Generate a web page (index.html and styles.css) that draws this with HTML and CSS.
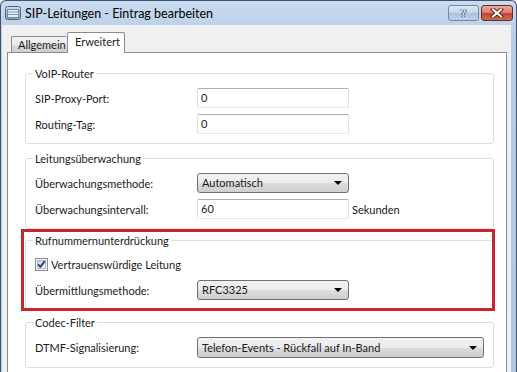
FILE: index.html
```html
<!DOCTYPE html>
<html lang="de">
<head>
    <meta charset="UTF-8">
    <title>SIP-Leitungen - Eintrag bearbeiten</title>
    <link rel="stylesheet" href="styles.css">
</head>
<body>
    <div class="window">
        <div class="titlebar">
            <svg class="app-icon" width="16" height="16" viewBox="0 0 16 16">
                <defs>
                    <linearGradient id="ig" x1="0" y1="0" x2="0" y2="1">
                        <stop offset="0" stop-color="#c9dced"/>
                        <stop offset="1" stop-color="#7f9fbd"/>
                    </linearGradient>
                </defs>
                <rect x="0.5" y="1.5" width="15" height="13" rx="2" fill="url(#ig)" stroke="#56636f"/>
                <rect x="2.5" y="4.5" width="11" height="8" fill="#e6eff7" stroke="#6f8aa3"/>
                <line x1="3" y1="7" x2="13" y2="7" stroke="#7e9bb6"/>
                <line x1="3" y1="9.5" x2="13" y2="9.5" stroke="#7e9bb6"/>
            </svg>
            <span class="title">SIP-Leitungen - Eintrag bearbeiten</span>
            <div class="caption-buttons">
                <div class="cap-btn help">?</div>
                <div class="cap-btn close">
                    <svg width="14" height="10" viewBox="0 0 14 10">
                        <path d="M3 1.5 L11 8.5 M11 1.5 L3 8.5" stroke="#5a1b12" stroke-width="4" stroke-linecap="square"/>
                        <path d="M3 1.5 L11 8.5 M11 1.5 L3 8.5" stroke="#fff" stroke-width="2.2" stroke-linecap="square"/>
                    </svg>
                </div>
            </div>
        </div>

        <div class="client">
            <div class="tabs">
                <div class="tab">Allgemein</div>
                <div class="tab selected">Erweitert</div>
            </div>

            <div class="panel">
                <!-- VoIP-Router -->
                <div class="group">
                    <div class="group-title">VoIP-Router</div>
                    <div class="row">
                        <span class="label">SIP-Proxy-Port:</span>
                        <div class="edit">0</div>
                    </div>
                    <div class="row">
                        <span class="label">Routing-Tag:</span>
                        <div class="edit">0</div>
                    </div>
                </div>

                <!-- Leitungsüberwachung -->
                <div class="group">
                    <div class="group-title">Leitungsüberwachung</div>
                    <div class="row">
                        <span class="label">Überwachungsmethode:</span>
                        <div class="combo">Automatisch<span class="arrow"></span></div>
                    </div>
                    <div class="row">
                        <span class="label">Überwachungsintervall:</span>
                        <div class="edit">60</div>
                        <span class="unit">Sekunden</span>
                    </div>
                </div>

                <!-- Rufnummernunterdrückung -->
                <div class="group group-clir">
                    <div class="group-title">Rufnummernunterdrückung</div>
                    <div class="row row-check">
                        <svg class="checkbox" width="13" height="13" viewBox="0 0 13 13">
                            <defs>
                                <linearGradient id="cg" x1="0" y1="0" x2="1" y2="1">
                                    <stop offset="0" stop-color="#cbcfd5"/>
                                    <stop offset="1" stop-color="#f6f6f6"/>
                                </linearGradient>
                            </defs>
                            <rect x="0.5" y="0.5" width="12" height="12" fill="#f4f4f4" stroke="#8e8f8f"/>
                            <rect x="2.5" y="2.5" width="8" height="8" fill="url(#cg)" stroke="#b7bcc4"/>
                            <path d="M3.2 6.4 L5.4 8.8 L9.8 3.2" fill="none" stroke="#2b3f86" stroke-width="1.9"/>
                        </svg>
                        <span class="check-label">Vertrauenswürdige Leitung</span>
                    </div>
                    <div class="row">
                        <span class="label">Übermittlungsmethode:</span>
                        <div class="combo">RFC3325<span class="arrow"></span></div>
                    </div>
                </div>

                <!-- Codec-Filter -->
                <div class="group group-codec">
                    <div class="group-title">Codec-Filter</div>
                    <div class="row">
                        <span class="label">DTMF-Signalisierung:</span>
                        <div class="combo combo-wide">Telefon-Events - Rückfall auf In-Band<span class="arrow"></span></div>
                    </div>
                </div>

                <div class="highlight"></div>
            </div>
        </div>
    </div>
</body>
</html>
```

FILE: styles.css
```css
/* page */
body {
    margin: 0;
    font-family: Lato, "Open Sans", sans-serif;
    font-size: 11px;
    color: #1a1a1a;
    background: #f0f0f0;
}

/* window frame */
.window {
    width: 517px;
    height: 372px;
    box-sizing: border-box;
    display: flex;
    flex-direction: column;
    border: 1px solid #3f536b;
    border-bottom: none;
    border-radius: 6px 6px 0 0;
    background: linear-gradient(#c8dbef, #b6cde7 40px, #aec7e3);
    overflow: hidden;
}

/* title bar */
.titlebar {
    height: 24px;
    display: flex;
    align-items: flex-start;
    padding: 0 3px 0 4px;
    box-sizing: border-box;
}

.app-icon {
    margin-top: 4px;
    flex: none;
}

.title {
    margin-left: 4px;
    margin-top: 5px;
    line-height: 15px;
    font-size: 12.5px;
    color: #000;
}

.caption-buttons {
    margin-left: auto;
    margin-top: 4px;
    display: flex;
    gap: 2px;
}

.cap-btn {
    height: 16px;
    box-sizing: border-box;
    border-radius: 3px;
    display: flex;
    align-items: center;
    justify-content: center;
}

.cap-btn.help {
    width: 31px;
    border: 1px solid #7688a0;
    background: linear-gradient(#dbe7f4, #c2d5ea 50%, #a9c1dc 51%, #bcd3ea);
    color: #fff;
    font-family: "DejaVu Sans", sans-serif;
    font-size: 11px;
    text-shadow: 0 0 1px #2d3d52, 1px 0 0 #3d4e66, -1px 0 0 #3d4e66;
}

.cap-btn.close {
    width: 32px;
    border: 1px solid #6d2a22;
    background: linear-gradient(#e9a99b, #d97f6c 50%, #c4432d 51%, #d16a4e);
}

/* client area */
.client {
    flex: 1;
    display: flex;
    flex-direction: column;
    margin: 0 5px 0 1px;
    padding: 0 4px 0 5px;
    background: #f0f0f0;
}

/* tabs */
.tabs {
    display: flex;
    padding: 7px 0 0 4px;
    height: 20px;
    position: relative;
    z-index: 1;
}

.tab {
    box-sizing: border-box;
    border: 1px solid #898c95;
    border-bottom: none;
    border-radius: 2px 2px 0 0;
    padding: 0 6px;
}

.tab:not(.selected) {
    width: 56px;
    height: 16px;
    margin-top: 4px;
    line-height: 15px;
    background: linear-gradient(#f3f3f3, #ebebeb 50%, #dddddd 51%, #cfcfcf);
    border-right: none;
}

.tab.selected {
    width: 58px;
    height: 21px;
    line-height: 18px;
    padding-left: 7px;
    background: #fff;
}

/* tab panel */
.panel {
    flex: 1;
    position: relative;
    background: #fff;
    border: 1px solid #898c95;
    border-bottom: none;
    padding-top: 20px;
}

/* group boxes */
.group {
    border: 1px solid #d5dfe5;
    border-radius: 3px;
    margin: 0 12px 0 17px;
    padding: 0 9px 9px 9px;
}

.group + .group {
    margin-top: 14px;
}

.group.group-clir {
    margin-top: 11px;
}

.group.group-codec {
    margin-top: 12px;
}

.group-title {
    width: fit-content;
    margin: -8px 0 0 -2px;
    padding: 0 2px;
    height: 15px;
    line-height: 15px;
    background: #fff;
}

.row {
    display: flex;
    align-items: center;
    height: 20px;
    margin-top: 6px;
}

.group-title + .row {
    margin-top: 7px;
}

.group-clir .row-check {
    margin-top: 6px;
}

.group-codec .row {
    height: 21px;
}

.label {
    width: 162px;
    flex: none;
}

/* text field */
.edit {
    width: 152px;
    height: 20px;
    box-sizing: border-box;
    border: 1px solid #dbdfe6;
    border-top-color: #abadb3;
    border-bottom-color: #e3e9ef;
    border-radius: 2px;
    padding-left: 3px;
    line-height: 18px;
    background: #fff;
}

.unit {
    margin-left: 3px;
}

/* combo box */
.combo {
    position: relative;
    width: 152px;
    height: 20px;
    box-sizing: border-box;
    border: 1px solid #707070;
    border-radius: 3px;
    padding-left: 4px;
    line-height: 18px;
    background: linear-gradient(#f2f2f2, #ebebeb 50%, #dddddd 51%, #cfcfcf);
}

.combo-wide {
    width: 287px;
    height: 21px;
    line-height: 19px;
}

.combo .arrow {
    position: absolute;
    right: 6px;
    top: 50%;
    margin-top: -2px;
    border-left: 4px solid transparent;
    border-right: 4px solid transparent;
    border-top: 4px solid #000;
}

/* check box */
.checkbox {
    flex: none;
}

.check-label {
    margin-left: 3px;
}

/* red annotation frame */
.highlight {
    position: absolute;
    left: 13px;
    top: 176px;
    width: 468px;
    height: 76px;
    border: 3px solid #c8262e;
    pointer-events: none;
}
```
